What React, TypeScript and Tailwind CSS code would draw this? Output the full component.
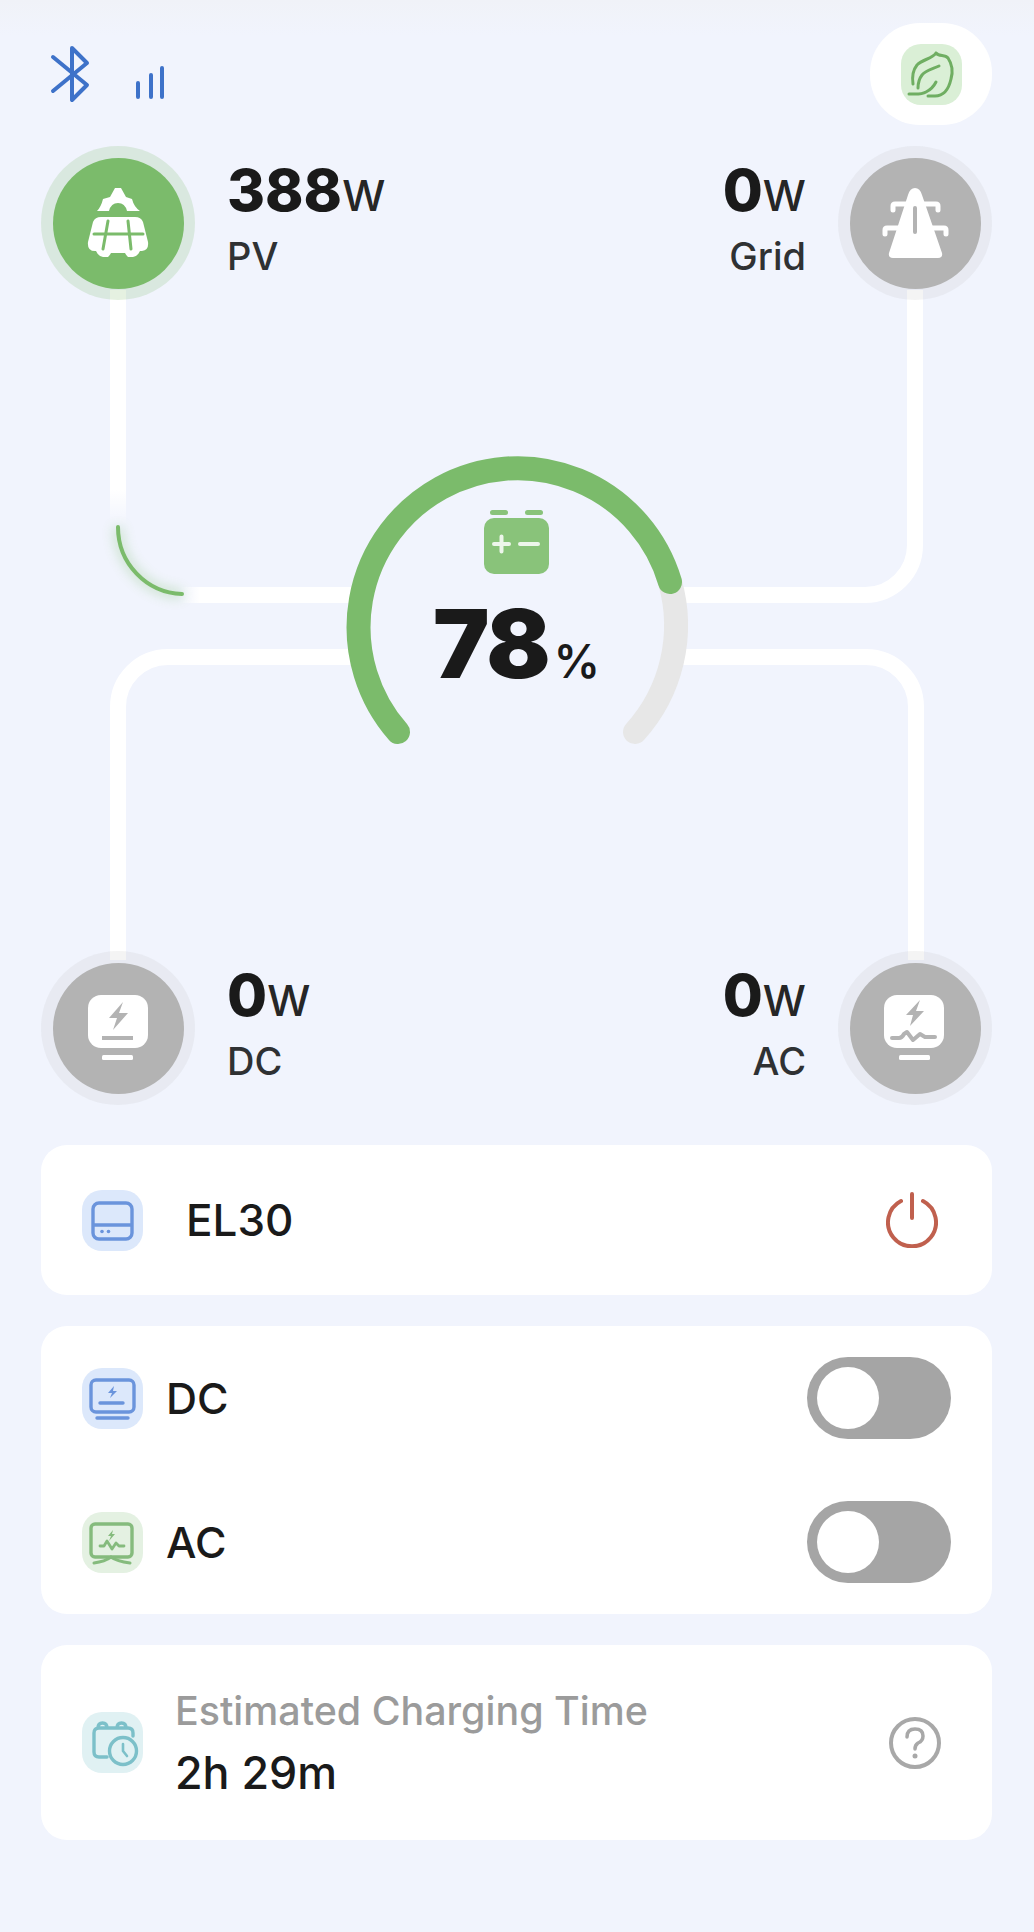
import type { ReactNode } from 'react'

const GREEN = '#7bbb6b'
const GRAY = '#b3b3b3'

function PvIcon() {
  return (
    <svg width="96" height="96" viewBox="0 5 96 96">
      <path d="M27 41 Q31 37 33 29 L40 27 L45 18 H51 L56 27 L62 29 Q64 37 70 41 L57 41 Q55 33 48 33 Q41 33 39 41 Z" fill="white" />
      <path
        d="M31 47 H65 Q71 47 73 52 L78 72 Q79 80 72 81 H70 Q68 86 63 87 H58 Q56 85 55 83 H41 Q40 85 38 87 H33 Q28 86 26 81 H25 Q17 81 18 72 L23 52 Q25 47 31 47 Z"
        fill="white"
      />
      <path d="M24 64 H73 M38 51 L33 79 M58 51 L61 79" stroke={GREEN} strokeWidth="3" strokeLinecap="round" fill="none" />
    </svg>
  )
}

function GridIcon() {
  return (
    <svg width="96" height="96" viewBox="0 0 96 96">
      <path d="M48 13 Q53 13 55 20 L75 78 Q76 83 71 83 H26 Q21 83 22 78 L41 20 Q43 13 48 13 Z" fill="white" />
      <path
        d="M26 35 V31 Q26 29 28 29 H69 Q71 29 71 31 V35 M18 59 V55 Q18 53 20 53 H77 Q79 53 79 55 V59"
        stroke="white"
        strokeWidth="5"
        strokeLinecap="round"
        fill="none"
      />
      <path d="M48 33 V57" stroke={GRAY} strokeWidth="4" strokeLinecap="round" />
    </svg>
  )
}

function DcIcon() {
  return (
    <svg width="96" height="96" viewBox="0 0 96 96">
      <rect x="18" y="15" width="60" height="53" rx="13" fill="white" />
      <rect x="32" y="75" width="31" height="5" rx="1.5" fill="white" />
      <path d="M32 58 H63" stroke={GRAY} strokeWidth="4" />
      <path d="M53 22 L39 38 H47 L43 50 L58 33 H49 Z" fill={GRAY} />
    </svg>
  )
}

function AcIcon() {
  return (
    <svg width="96" height="96" viewBox="0 0 96 96">
      <rect x="17" y="15" width="60" height="53" rx="13" fill="white" />
      <rect x="32" y="75" width="31" height="5" rx="1.5" fill="white" />
      <path d="M25 58 H32 Q35 58 37 54 L40 52 L46 60 L53 54 L58 57 H68" stroke={GRAY} strokeWidth="4" strokeLinecap="round" strokeLinejoin="round" fill="none" />
      <path d="M53 20 L39 35 H46 L43 46 L57 31 H49 Z" fill={GRAY} />
    </svg>
  )
}

function IconBox({ bg, children }: { bg: string; children: ReactNode }) {
  return (
    <div className={`w-[61px] h-[61px] rounded-[20px] shrink-0 ${bg}`}>
      <svg width="61" height="61" viewBox="0 0 61 61" fill="none">
        {children}
      </svg>
    </div>
  )
}

function Node({ value, label, ring, fill, reverse, children }: {
  value: string
  label: string
  ring: string
  fill: string
  reverse?: boolean
  children: ReactNode
}) {
  return (
    <div className={`flex gap-[32px] ${reverse ? 'flex-row-reverse' : ''}`}>
      <div className={`w-[154px] h-[154px] rounded-full flex items-center justify-center ${ring}`}>
        <div className={`w-[131px] h-[131px] rounded-full flex items-center justify-center ${fill}`}>{children}</div>
      </div>
      <div className={`flex flex-col pt-[15px] ${reverse ? 'items-end' : 'items-start'}`}>
        <div className="flex items-baseline leading-none">
          <span className="text-[58px] leading-[58px] font-extrabold text-[#1a1a1a]">{value}</span>
          <span className="text-[43px] leading-[58px] font-medium text-[#262626]">W</span>
        </div>
        <span className="text-[38px] leading-[37px] font-medium text-[#2f3133] mt-[14px]">{label}</span>
      </div>
    </div>
  )
}

function Toggle() {
  return (
    <div className="w-[144px] h-[82px] rounded-full bg-[#a5a5a5] flex items-center pl-[10px]">
      <div className="w-[62px] h-[62px] rounded-full bg-white" />
    </div>
  )
}

export default function App() {
  return (
    <div className="relative w-full min-h-screen bg-[#f1f4fd] font-[Inter,sans-serif] overflow-hidden">
      <div className="absolute top-0 left-0 w-full h-[36px] bg-linear-to-b from-[#f0f2f8] to-transparent" />

      {/* flow diagram */}
      <div className="relative pl-[41px] pr-[42px] pt-[23px] pb-[40px]">
        <svg className="absolute top-0 left-0" width="1034" height="1145" viewBox="0 0 1034 1145" fill="none">
          <defs>
            <linearGradient id="fadeV" gradientUnits="userSpaceOnUse" x1="0" y1="490" x2="0" y2="525">
              <stop offset="0" stopColor="white" />
              <stop offset="1" stopColor="white" stopOpacity="0" />
            </linearGradient>
            <linearGradient id="fadeH" gradientUnits="userSpaceOnUse" x1="180" y1="0" x2="200" y2="0">
              <stop offset="0" stopColor="white" stopOpacity="0" />
              <stop offset="1" stopColor="white" />
            </linearGradient>
            <filter id="glow" x="-50%" y="-50%" width="200%" height="200%">
              <feGaussianBlur stdDeviation="6" />
            </filter>
          </defs>
          <path d="M118 290 V525" stroke="url(#fadeV)" strokeWidth="16" />
          <path d="M180 595 H352" stroke="url(#fadeH)" strokeWidth="16" />
          <path d="M680 595 H865 A50 50 0 0 0 915 545 V290" stroke="white" strokeWidth="16" />
          <path d="M118 960 V707 A50 50 0 0 1 168 657 H352" stroke="white" strokeWidth="16" />
          <path d="M680 657 H866 A50 50 0 0 1 916 707 V960" stroke="white" strokeWidth="16" />
          <path d="M118 527 A66 67 0 0 0 182 594" stroke={GREEN} strokeWidth="10" opacity="0.3" filter="url(#glow)" />
          <path d="M118 527 A66 67 0 0 0 182 594" stroke={GREEN} strokeWidth="4" strokeLinecap="round" />
          <path d="M670 582 A159 159 0 0 1 635 732" stroke="#e7e7e7" strokeWidth="24" strokeLinecap="round" />
          <path d="M398 732 A159 159 0 1 1 670 582" stroke={GREEN} strokeWidth="24" strokeLinecap="round" />
        </svg>

        {/* status row */}
        <div className="relative flex items-center justify-between h-[102px]">
          <div className="flex items-center gap-[42px] ml-[7px]">
            <svg width="44" height="60" viewBox="0 0 44 60" fill="none">
              <path d="M5 13 L39 41 L24 56 V4 L39 19 L5 47" stroke="#3e72c9" strokeWidth="4" strokeLinecap="round" strokeLinejoin="round" />
            </svg>
            <svg width="32" height="60" viewBox="0 0 32 60" fill="none">
              <path d="M4 39 V53 M17 31 V53 M28 24 V53" stroke="#3e72c9" strokeWidth="4" strokeLinecap="round" />
            </svg>
          </div>
          <div className="w-[122px] h-[102px] rounded-[50px] bg-white flex items-center justify-center">
            <IconBox bg="bg-[#daefd6]">
              <path
                d="M35 9 C38 13 44 10 47 14 C51 20 52 28 50 35 C48 44 43 52 34 52 H27 M35 9 C31 15 22 15 16 21 C12 26 11 33 12 40 M38 22 C32 25 25 26 21 31 C18 35 17 39 17 44 M8 50 C14 50 20 51 25 48 C29 46 33 42 35 38"
                stroke="#6fae62"
                strokeWidth="3"
                strokeLinecap="round"
                strokeLinejoin="round"
              />
            </IconBox>
          </div>
        </div>

        <div className="relative flex justify-between mt-[21px]">
          <Node value="388" label="PV" ring="bg-[#7bbb6b]/20" fill="bg-[#7bbb6b]">
            <PvIcon />
          </Node>
          <Node value="0" label="Grid" ring="bg-[#b3b3b3]/15" fill="bg-[#b3b3b3]" reverse>
            <GridIcon />
          </Node>
        </div>

        {/* battery */}
        <div className="relative h-[651px] flex flex-col items-center pt-[210px]">
          <svg width="65" height="64" viewBox="0 0 65 64">
            <rect x="6" y="0" width="18" height="5" rx="2.5" fill="#89c37a" />
            <rect x="41" y="0" width="18" height="5" rx="2.5" fill="#89c37a" />
            <rect x="0" y="8" width="65" height="56" rx="10" fill="#89c37a" />
            <path d="M10 34 H25 M17.5 26.5 V41.5 M36 34 H54" stroke="white" strokeWidth="4" strokeLinecap="round" opacity="0.85" />
          </svg>
          <div className="flex items-baseline mt-[21px]">
            <span className="text-[95px] leading-[97px] font-black text-[#1a1a1a] tracking-[-2px]">78</span>
            <span className="text-[46px] leading-[39px] font-semibold text-[#1a1a1a] ml-[5px]">%</span>
          </div>
        </div>

        <div className="relative flex justify-between">
          <Node value="0" label="DC" ring="bg-[#b3b3b3]/15" fill="bg-[#b3b3b3]">
            <DcIcon />
          </Node>
          <Node value="0" label="AC" ring="bg-[#b3b3b3]/15" fill="bg-[#b3b3b3]" reverse>
            <AcIcon />
          </Node>
        </div>
      </div>

      {/* cards */}
      <div className="relative flex flex-col gap-[31px] pl-[41px] pr-[42px]">
        <div className="h-[150px] rounded-[26px] bg-white flex items-center pl-[41px] pr-[54px]">
          <IconBox bg="bg-[#dce8fb]">
            <rect x="11" y="13" width="39" height="36" rx="6" stroke="#6a94dc" strokeWidth="3.4" />
            <path d="M11 35 H50" stroke="#6a94dc" strokeWidth="3.4" />
            <circle cx="20" cy="41.5" r="1.8" fill="#6a94dc" />
            <circle cx="26.5" cy="41.5" r="1.8" fill="#6a94dc" />
          </IconBox>
          <span className="ml-[43px] text-[44px] leading-none font-medium text-[#1a1a1a]">EL30</span>
          <svg className="ml-auto" width="52" height="56" viewBox="0 0 52 56" fill="none">
            <path d="M15 9 A24 24 0 1 0 37 9 M26 2 V26" stroke="#c0604e" strokeWidth="4" strokeLinecap="round" />
          </svg>
        </div>

        <div className="rounded-[26px] bg-white flex flex-col gap-[62px] py-[31px] pl-[41px] pr-[41px]">
          <div className="flex items-center">
            <IconBox bg="bg-[#dce8fb]">
              <rect x="9" y="12" width="43" height="32" rx="5" stroke="#6a94dc" strokeWidth="3.4" />
              <path d="M18 35 H41 M15 50 H46" stroke="#6a94dc" strokeWidth="3.4" strokeLinecap="round" />
              <path d="M32 18 L26 25 H30 L28 30 L35 23 H31 Z" fill="#6a94dc" />
            </IconBox>
            <span className="ml-[23px] text-[43px] leading-none font-medium text-[#1a1a1a]">DC</span>
            <div className="ml-auto">
              <Toggle />
            </div>
          </div>
          <div className="flex items-center">
            <IconBox bg="bg-[#e4f1e2]">
              <rect x="9" y="12" width="41" height="33" rx="4" stroke="#85bb7d" strokeWidth="3.4" />
              <path d="M18 34 H22 L25 29 L30 37 L34 31 L37 34 H42" stroke="#85bb7d" strokeWidth="2.8" strokeLinecap="round" strokeLinejoin="round" />
              <path d="M31 18 L26 24 H29 L27 29 L33 22 H30 Z" fill="#85bb7d" />
              <path d="M12 51 C20 50 25 48 29 45 C33 48 40 50 48 51" stroke="#85bb7d" strokeWidth="3" strokeLinecap="round" />
            </IconBox>
            <span className="ml-[23px] text-[43px] leading-none font-medium text-[#1a1a1a]">AC</span>
            <div className="ml-auto">
              <Toggle />
            </div>
          </div>
        </div>

        <div className="h-[195px] rounded-[26px] bg-white flex items-center pl-[41px] pr-[51px]">
          <IconBox bg="bg-[#e0f1f3]">
            <path
              d="M25 45 H17 Q12 45 12 40 V21 Q12 16 17 16 H46 Q51 16 51 21 V24 M16 16 Q16 11 20.5 11 Q25 11 25 16 M35 16 Q35 11 39.5 11 Q44 11 44 16"
              stroke="#7cc0c9"
              strokeWidth="3.4"
              strokeLinecap="round"
            />
            <circle cx="41" cy="39" r="13.5" stroke="#7cc0c9" strokeWidth="3.4" />
            <path d="M41 32 V39 L45 44" stroke="#7cc0c9" strokeWidth="2.6" strokeLinecap="round" strokeLinejoin="round" />
          </IconBox>
          <div className="ml-[32px] flex flex-col gap-[22px]">
            <span className="text-[39.4px] leading-[38px] font-medium text-[#9b9b9b]">Estimated Charging Time</span>
            <span className="text-[44.8px] leading-[42px] font-medium text-[#1a1a1a]">2h 29m</span>
          </div>
          <svg className="ml-auto" width="52" height="52" viewBox="0 0 52 52" fill="none">
            <circle cx="26" cy="26" r="24" stroke="#a8a8a8" strokeWidth="4" />
            <path d="M18 20 Q18 12 26 12 Q34 12 34 19 Q34 24 29 26 Q26 28 26 32" stroke="#a8a8a8" strokeWidth="3.5" strokeLinecap="round" />
            <circle cx="26" cy="39" r="2.5" fill="#a8a8a8" />
          </svg>
        </div>
      </div>
    </div>
  )
}
